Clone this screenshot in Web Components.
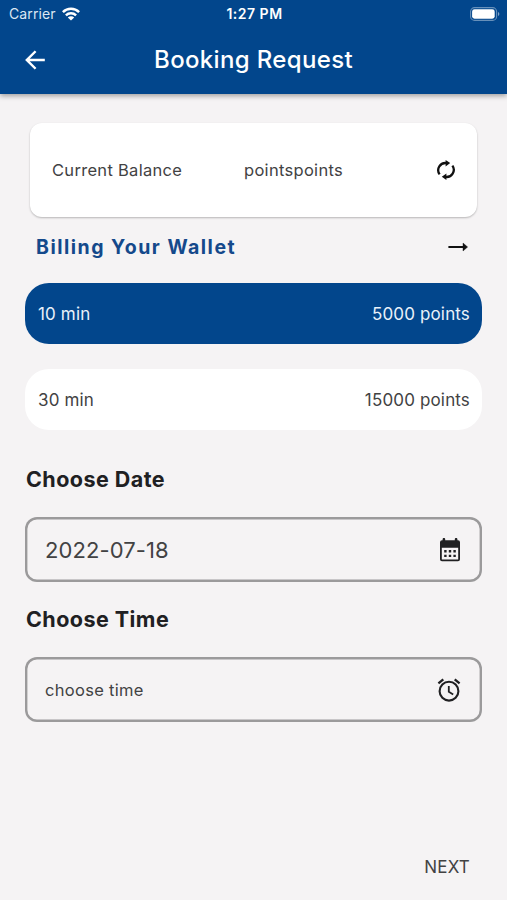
<!DOCTYPE html>
<html lang="en">
<head>
<meta charset="UTF-8">
<meta name="viewport" content="width=device-width, initial-scale=1.0">
<title>Booking Request</title>
<style>
  body {
    margin: 0;
    background: #f5f3f4;
    font-family: Inter, "Liberation Sans", sans-serif;
    color: #424243;
  }
</style>
</head>
<body>
<booking-page>
  <app-header slot="header" time="1:27 PM" carrier="Carrier">Booking Request</app-header>
  <balance-card label="Current Balance">pointspoints</balance-card>
  <wallet-link>Billing Your Wallet</wallet-link>
  <price-option points="5000 points" selected>10 min</price-option>
  <price-option points="15000 points">30 min</price-option>
  <picker-field label="Choose Date" icon="calendar" filled>2022-07-18</picker-field>
  <picker-field label="Choose Time" icon="alarm">choose time</picker-field>
  <next-button slot="footer">NEXT</next-button>
</booking-page>

<script>
const icons = {
  back: `<svg width="28" height="28" viewBox="0 0 24 24" fill="none" stroke="#fff" stroke-width="2.1"><path d="M20.4 12H5.2M12.5 4.5L5 12l7.5 7.5"/></svg>`,
  wifi: `<svg width="18" height="14" viewBox="0 0 18 14" fill="none" stroke="#fff" stroke-width="2.5"><path d="M.9 5.1a11.6 11.6 0 0 1 16.2 0M3.9 8.4a7.4 7.4 0 0 1 10.2 0"/><path d="M9 13.6L5.8 10.6a4.6 4.6 0 0 1 6.4 0z" fill="#fff" stroke="none"/></svg>`,
  battery: `<svg width="30" height="14" viewBox="0 0 30 14"><rect x=".6" y=".6" width="26" height="12.8" rx="4" fill="none" stroke="#fff" stroke-opacity=".4" stroke-width="1.1"/><rect x="2.1" y="2.3" width="22.6" height="9.4" rx="2.4" fill="#fff"/><path d="M28 4.9a2.3 2.3 0 0 1 0 4.2z" fill="#fff" fill-opacity=".5"/></svg>`,
  refresh: `<svg width="20" height="20" viewBox="0 0 20 20" fill="none" stroke="#111" stroke-width="2.3"><path d="M3.6 14.4A7.2 7.2 0 0 1 10.6 3.1M16.4 5.6A7.2 7.2 0 0 1 9.4 16.9"/><path d="M9.6 0l4.6 3.1L9.6 6.4zM10.4 13.6l-4.6 3.2L10.4 20z" fill="#111" stroke="none"/></svg>`,
  arrow: `<svg width="20" height="10" viewBox="0 0 20 10"><path d="M1.2 5H16" stroke="#111" stroke-width="2.1" stroke-linecap="round"/><path d="M15 1l4.6 4L15 9z" fill="#111" stroke="#111" stroke-width=".4"/></svg>`,
  calendar: `<svg width="22" height="24" viewBox="0 0 22 24"><path fill="#202022" fill-rule="evenodd" d="M3.6 1.2a1.3 1.3 0 0 1 2.6 0v1h9.6v-1a1.3 1.3 0 0 1 2.6 0v1h.6a2 2 0 0 1 2 2v17a2 2 0 0 1-2 2H3a2 2 0 0 1-2-2v-17a2 2 0 0 1 2-2h.6zM2.8 9.8v11.6h16.4V9.8z"/><path fill="#202022" d="M5.2 12h2.4v2.4H5.2zM9.8 12h2.4v2.4H9.8zM14.4 12h2.4v2.4h-2.4zM5.2 16.7h2.4v2.4H5.2zM9.8 16.7h2.4v2.4H9.8zM14.4 16.7h2.4v2.4h-2.4z"/></svg>`,
  alarm: `<svg width="24" height="24" viewBox="0 0 24 24" fill="none" stroke="#202022"><circle cx="12" cy="13.2" r="9.4" stroke-width="2.1"/><path d="M1.4 5.4L6.3 1.3M22.6 5.4L17.7 1.3" stroke-width="2.3"/><path d="M11.8 8v5.7l4.4 2.7" stroke-width="1.8"/></svg>`
};

class BookingPage extends HTMLElement {
  constructor() {
    super();
    this.attachShadow({mode: 'open'});
  }

  connectedCallback() {
    this.shadowRoot.innerHTML = `
      <style>
        :host {
          display: flex;
          flex-direction: column;
          height: 900px;
          overflow: hidden;
        }
        main {
          flex: 1;
          display: flex;
          flex-direction: column;
          padding: 29px 25px 0;
        }
        footer {
          display: flex;
          justify-content: flex-end;
          padding: 0 37px 20px 0;
        }
      </style>
      <slot name="header"></slot>
      <main><slot></slot></main>
      <footer><slot name="footer"></slot></footer>
    `;
  }
}

class AppHeader extends HTMLElement {
  constructor() {
    super();
    this.attachShadow({mode: 'open'});
  }

  connectedCallback() {
    this.shadowRoot.innerHTML = `
      <style>
        :host {
          display: block;
          height: 94px;
          box-sizing: border-box;
          background: #02468c;
          color: #fff;
          box-shadow: 0 2px 5px rgba(0, 0, 0, 0.35);
        }
        svg { display: block; }
        .status {
          display: grid;
          grid-template-columns: 1fr auto 1fr;
          align-items: center;
          height: 27px;
          padding: 0 7px 0 9px;
          font-size: 14px;
          line-height: 27px;
        }
        .carrier {
          display: flex;
          align-items: center;
          gap: 6px;
          color: #dce7f3;
        }
        .carrier span { letter-spacing: 0.1px; }
        .time {
          font-weight: 600;
          letter-spacing: 0.5px;
        }
        .battery { justify-self: end; }
        .bar {
          display: grid;
          grid-template-columns: 60px 1fr 60px;
          align-items: center;
          height: 66px;
          padding: 0 21px;
        }
        .title {
          margin-top: -2px;
          text-align: center;
          font-size: 24px;
          font-weight: 500;
          letter-spacing: 0.35px;
        }
      </style>
      <div class="status">
        <div class="carrier"><span>${this.getAttribute('carrier')}</span>${icons.wifi}</div>
        <span class="time">${this.getAttribute('time')}</span>
        <div class="battery">${icons.battery}</div>
      </div>
      <div class="bar">
        ${icons.back}
        <div class="title"><slot></slot></div>
      </div>
    `;
  }
}

class BalanceCard extends HTMLElement {
  constructor() {
    super();
    this.attachShadow({mode: 'open'});
  }

  connectedCallback() {
    this.shadowRoot.innerHTML = `
      <style>
        :host {
          display: grid;
          grid-template-columns: 192px 1fr auto;
          align-items: center;
          height: 94px;
          margin: 0 5px;
          padding: 0 21px 0 22px;
          box-sizing: border-box;
          background: #fff;
          border-radius: 12px;
          box-shadow: 0 1px 2px rgba(0, 0, 0, 0.25);
          font-size: 16.5px;
          letter-spacing: 0.3px;
        }
        svg { display: block; }
      </style>
      <span>${this.getAttribute('label')}</span>
      <span><slot></slot></span>
      ${icons.refresh}
    `;
  }
}

class WalletLink extends HTMLElement {
  constructor() {
    super();
    this.attachShadow({mode: 'open'});
  }

  connectedCallback() {
    this.shadowRoot.innerHTML = `
      <style>
        :host {
          display: flex;
          justify-content: space-between;
          align-items: center;
          height: 60px;
          margin-bottom: 6px;
          padding: 0 14px 0 11px;
          box-sizing: border-box;
          color: #14498b;
          font-size: 19.5px;
          font-weight: 700;
          letter-spacing: 1.5px;
        }
      </style>
      <span><slot></slot></span>
      ${icons.arrow}
    `;
  }
}

class PriceOption extends HTMLElement {
  constructor() {
    super();
    this.attachShadow({mode: 'open'});
  }

  connectedCallback() {
    this.shadowRoot.innerHTML = `
      <style>
        :host {
          display: flex;
          justify-content: space-between;
          align-items: center;
          height: 61px;
          margin-bottom: 25px;
          padding: 0 12px 0 13px;
          box-sizing: border-box;
          background: #fff;
          border-radius: 24px;
          font-size: 17px;
          letter-spacing: 0.15px;
        }
        :host([selected]) {
          background: #02468c;
          color: #e9f1fa;
        }
      </style>
      <span><slot></slot></span>
      <span>${this.getAttribute('points')}</span>
    `;
  }
}

class PickerField extends HTMLElement {
  constructor() {
    super();
    this.attachShadow({mode: 'open'});
  }

  connectedCallback() {
    this.shadowRoot.innerHTML = `
      <style>
        :host {
          display: block;
          margin: 9px 0 13px;
        }
        .label {
          height: 53px;
          padding-left: 1px;
          color: #202022;
          font-size: 21.5px;
          font-weight: 650;
          line-height: 30px;
          letter-spacing: 0.45px;
        }
        .field {
          display: flex;
          justify-content: space-between;
          align-items: center;
          height: 65px;
          padding: 0 21px 0 20px;
          box-sizing: border-box;
          border-radius: 12px;
          box-shadow: inset 0 0 0 2.4px #9b9a9b;
          font-size: 16.5px;
          letter-spacing: 0.3px;
        }
        :host([filled]) .field {
          font-size: 22px;
          letter-spacing: 0.1px;
        }
        svg { display: block; }
      </style>
      <div class="label">${this.getAttribute('label')}</div>
      <div class="field">
        <span><slot></slot></span>
        ${icons[this.getAttribute('icon')]}
      </div>
    `;
  }
}

class NextButton extends HTMLElement {
  constructor() {
    super();
    this.attachShadow({mode: 'open'});
  }

  connectedCallback() {
    this.shadowRoot.innerHTML = `
      <style>
        :host {
          display: block;
          font-size: 17px;
          line-height: 26px;
          letter-spacing: 0.2px;
        }
      </style>
      <slot></slot>
    `;
  }
}

customElements.define('booking-page', BookingPage);
customElements.define('app-header', AppHeader);
customElements.define('balance-card', BalanceCard);
customElements.define('wallet-link', WalletLink);
customElements.define('price-option', PriceOption);
customElements.define('picker-field', PickerField);
customElements.define('next-button', NextButton);
</script>
</body>
</html>
